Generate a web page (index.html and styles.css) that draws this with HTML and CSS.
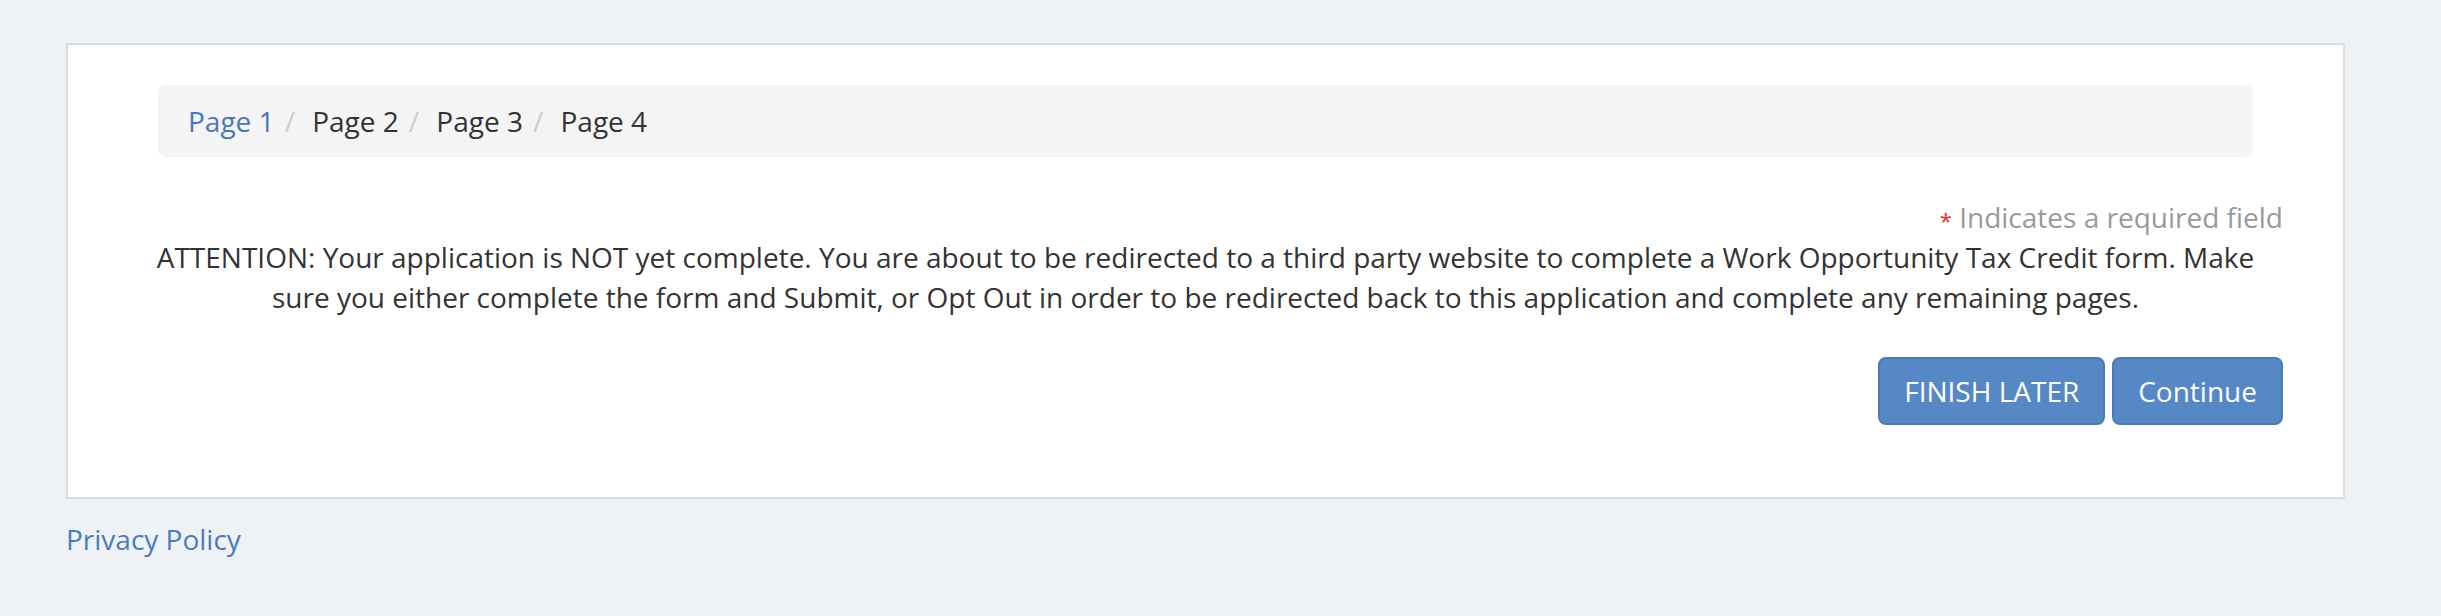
FILE: index.html
```html
<!DOCTYPE html>
<html lang="en">
<head>
<meta charset="utf-8">
<title>Application</title>
<link rel="stylesheet" href="styles.css">
</head>
<body>
<div class="page">
  <div class="card">
    <ol class="breadcrumb">
      <li><a href="#" class="crumb-link">Page 1</a></li>
      <li>Page 2</li>
      <li>Page 3</li>
      <li>Page 4</li>
    </ol>
    <div class="required"><span class="star">*</span> Indicates a required field</div>
    <p class="notice">ATTENTION: Your application is NOT yet complete. You are about to be redirected to a third party website to complete a Work Opportunity Tax Credit form. Make sure you either complete the form and Submit, or Opt Out in order to be redirected back to this application and complete any remaining pages.</p>
    <div class="actions">
      <button class="btn">FINISH LATER</button>
      <button class="btn">Continue</button>
    </div>
  </div>
  <div class="footer"><a href="#" class="footer-link">Privacy Policy</a></div>
</div>
</body>
</html>
```
FILE: styles.css
```css
html, body {
  margin: 0;
  padding: 0;
}
body {
  background: #eff2f5;
  font-family: "Open Sans", "Liberation Sans", sans-serif;
  font-size: 28px;
  line-height: 40px;
  color: #333;
}
.page {
  padding: 43px 0 0 66px;
}
.card {
  box-sizing: border-box;
  width: 2279px;
  background: #fff;
  border: 2px solid #dcdcdc;
  padding: 40px 60px 72px 60px;
}
.breadcrumb {
  list-style: none;
  margin: 0 30px 40px 30px;
  padding: 16px 30px;
  background: #f4f4f4;
  border-radius: 8px;
  display: flex;
}
.breadcrumb li + li::before {
  content: "/\00a0";
  padding: 0 10px;
  color: #ccc;
}
.crumb-link {
  color: #4a77b6;
  text-decoration: none;
}
.required {
  text-align: right;
  color: #999;
}
.star {
  color: #e5302a;
  font-size: 22px;
  line-height: 0;
  vertical-align: -1px;
}
.notice {
  margin: 0 0 40px 0;
  text-align: center;
}
.actions {
  display: flex;
  justify-content: flex-end;
  gap: 7px;
}
.btn {
  font-family: "Open Sans", "Liberation Sans", sans-serif;
  font-size: 28px;
  line-height: 40px;
  color: #fff;
  background: #5588c5;
  border: 2px solid #4a7bb7;
  border-radius: 8px;
  padding: 12px 24px;
  margin: 0;
  cursor: pointer;
}
.footer {
  padding-top: 20px;
}
.footer-link {
  color: #4a7cc0;
  text-decoration: none;
}
```
